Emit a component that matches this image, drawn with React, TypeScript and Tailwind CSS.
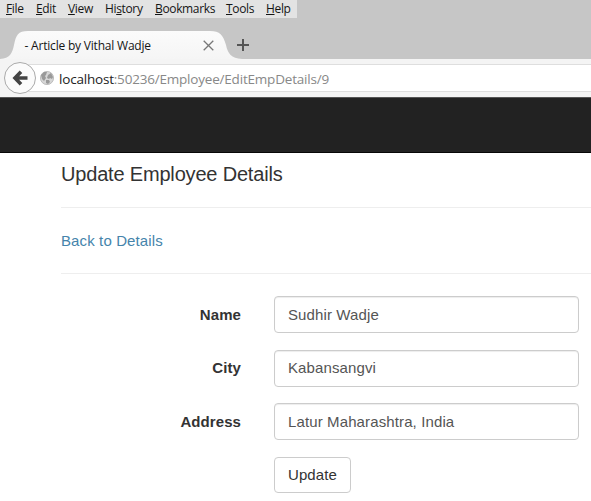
import React from 'react';

const menus = [
  { before: '', key: 'F', after: 'ile', width: 'w-[30px]' },
  { before: '', key: 'E', after: 'dit', width: 'w-8' },
  { before: '', key: 'V', after: 'iew', width: 'w-[37px]' },
  { before: 'Hi', key: 's', after: 'tory', width: 'w-[50px]' },
  { before: '', key: 'B', after: 'ookmarks', width: 'w-[71px]' },
  { before: '', key: 'T', after: 'ools', width: 'w-10' },
  { before: '', key: 'H', after: 'elp', width: 'w-[31px]' },
];

function MenuBar() {
  return (
    <nav className="flex h-[18px] w-[297px] bg-[#e3e3e3] pl-1.5 text-[12px] leading-[17px] tracking-[-0.35px] text-[#151515]">
      {menus.map((m) => (
        <span key={m.key} className={`${m.width} shrink-0 whitespace-nowrap`}>
          {m.before}
          <span className="underline decoration-1 underline-offset-1">{m.key}</span>
          {m.after}
        </span>
      ))}
    </nav>
  );
}

function TabStrip() {
  return (
    <div className="relative flex h-[41px] pt-3">
      <svg className="absolute left-0 top-[13px]" width="245" height="28" viewBox="0 0 245 28">
        <defs>
          <linearGradient id="tab" x1="0" y1="0" x2="0" y2="1">
            <stop offset="0" stopColor="#fbfbfb" />
            <stop offset="1" stopColor="#f5f5f5" />
          </linearGradient>
        </defs>
        <path d="M0 28C10 27 12 23 14 14C16 4 18 0 28 0H210C220 0 223 4 226 14C228 23 231 27 242 28Z" fill="url(#tab)" />
      </svg>
      <div className="relative flex h-[29px] w-[233px] items-center justify-between pl-[24.5px] pr-[19px] pt-0.5 text-[12px] tracking-[-0.2px] text-[#151515]">
        <span className="whitespace-nowrap">- Article by Vithal Wadje</span>
        <svg width="11" height="11" viewBox="0 0 11 11" stroke="#777" strokeWidth="1.3">
          <path d="M.7.7 10.3 10.3M10.3.7.7 10.3" />
        </svg>
      </div>
      <svg className="ml-[4px] mt-[9px]" width="12" height="12" viewBox="0 0 12 12" stroke="#555" strokeWidth="2">
        <path d="M6 0V12M0 6H12" />
      </svg>
    </div>
  );
}

function AddressBar() {
  return (
    <div className="flex h-[39px] items-start border-b border-[#555] bg-[#f4f4f4] pt-[5px]">
      <div className="relative z-10 -mt-[2px] ml-1 flex size-8 shrink-0 items-center justify-center rounded-full border border-[#aaa] bg-[#fbfbfb]">
        <svg width="16" height="16" viewBox="0 0 16 16" fill="none" stroke="#444" strokeWidth="3.6">
          <path d="M9 1.8 3 8 9 14.2M3.5 8H15.5" />
        </svg>
      </div>
      <div className="-ml-2 flex h-7 flex-1 items-center border-y border-[#dedede] bg-white pl-3">
        <svg width="14" height="14" viewBox="0 0 14 14" className="mr-[5px] shrink-0">
          <circle cx="7" cy="7" r="6.6" fill="#d6d6d6" stroke="#b3b3b3" strokeWidth=".8" />
          <path d="M1 4 4 1 7 1 6 4 5 5 6 7 4 10 2 8ZM8 4l3-2 2 4-1 2-2-1-1 1-2-1ZM6 9l3 0 1 2-2 2-2-1Z" fill="#999" />
        </svg>
        <span className="whitespace-nowrap pt-0.5 text-[13.5px] tracking-[-0.2px] text-[#888]">
          <span className="text-[#222]">localhost</span>:50236/Employee/EditEmpDetails/9
        </span>
      </div>
    </div>
  );
}

function Field({ label, value }: { label: string; value: string }) {
  return (
    <div className="flex h-[37px]">
      <label className="mr-[33px] w-[241px] pt-[7.5px] text-right font-bold leading-[21px] tracking-[0.08px]">{label}</label>
      <input
        aria-label={label}
        defaultValue={value}
        className="h-[37px] w-[305px] rounded-[4px] border border-[#ccc] bg-white px-[13px] pb-px tracking-[0.12px] text-[#555] shadow-[inset_0_1px_1px_rgba(0,0,0,0.075)] outline-none"
      />
    </div>
  );
}

export default function App() {
  return (
    <div className="h-[501px] w-[591px] overflow-hidden bg-white">
      <header className="bg-[#c6c6c6] font-['Open_Sans','Noto_Sans',sans-serif]">
        <MenuBar />
        <TabStrip />
        <AddressBar />
      </header>
      <div className="h-[55px] border-b border-[#080808] bg-[#222]" />
      <main className="font-['Liberation_Sans',Arial,sans-serif] text-[15px] text-[#333]">
        <div className="ml-[61px]">
          <h1 className="h-[54px] pt-[9px] text-[20px] leading-6 tracking-[-0.18px]">Update Employee Details</h1>
          <div className="flex h-[67px] items-center border-y border-[#eee] pt-0.5">
            <a className="tracking-[0.12px] text-[#4584ab]">Back to Details</a>
          </div>
        </div>
        <form className="flex flex-col gap-[16.5px] pt-[22px]">
          <Field label="Name" value="Sudhir Wadje" />
          <Field label="City" value="Kabansangvi" />
          <Field label="Address" value="Latur Maharashtra, India" />
          <button type="button" className="ml-[274px] h-9 w-[77px] rounded-[4px] border border-[#ccc] bg-white pt-px tracking-[0.1px]">Update</button>
        </form>
      </main>
    </div>
  );
}
